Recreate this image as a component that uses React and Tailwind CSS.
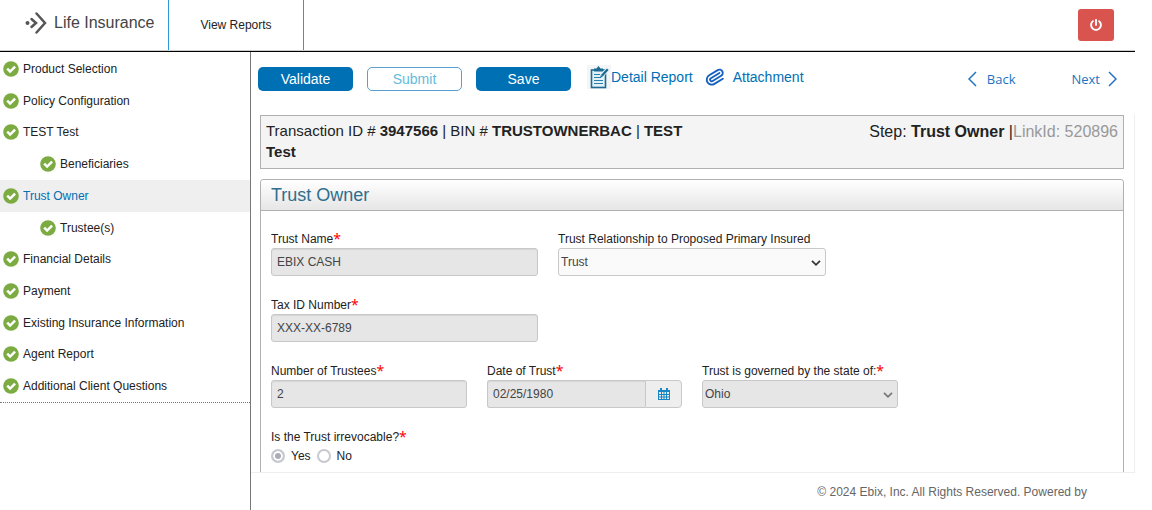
import React from "react";
import { FaPowerOff } from "react-icons/fa";

const steps = [
  { label: "Product Selection" },
  { label: "Policy Configuration" },
  { label: "TEST Test" },
  { label: "Beneficiaries", nested: true },
  { label: "Trust Owner", active: true },
  { label: "Trustee(s)", nested: true },
  { label: "Financial Details" },
  { label: "Payment" },
  { label: "Existing Insurance Information" },
  { label: "Agent Report" },
  { label: "Additional Client Questions" },
];

function Logo() {
  return (
    <svg className="h-6 w-6 shrink-0" viewBox="0 0 24 24" fill="none" stroke="#555" strokeWidth="2.5" strokeLinecap="round" strokeLinejoin="miter" aria-hidden="true">
      <circle cx="3.5" cy="12" r="2" fill="#555" stroke="none" />
      <path d="M7.500 8l4.500 4-4.500 4" />
      <path d="M12.500 2.500l8.500 9.500-8.500 9.500" />
    </svg>
  );
}

function CheckIcon() {
  return (
    <svg className="h-4 w-4 shrink-0" viewBox="0 0 16 16" aria-hidden="true">
      <circle cx="8" cy="8" r="7.800" fill="#7cab42" />
      <path d="M4.200 7.700l2.900 2.900 5-5" fill="none" stroke="#fff" strokeWidth="2.500" />
    </svg>
  );
}

function ReportIcon() {
  return (
    <svg className="h-6 w-6 shrink-0 bg-[#f3f5f6]" viewBox="0 0 24 24" fill="none" aria-hidden="true">
      <rect x="4.500" y="5" width="14" height="17.500" fill="#e3f1f7" stroke="#1d6a93" strokeWidth="1.600" />
      <path d="M7 3.500h2.500l2-2.500 2 2.500H16v3H7z" fill="#1d6a93" />
      <path d="M7 9.500h6M7 12.500h7M7 15.500h9M7 18.500h9" stroke="#2582ad" strokeWidth="1.200" />
      <path d="M20.800 4.200l-6.300 6.800" stroke="#e8f4fa" strokeWidth="4" />
      <path d="M20.800 4.200l-6 6.600" stroke="#1d6a93" strokeWidth="2.300" />
      <path d="M13.200 12.700l.600-2.600 1.900 1.600z" fill="#1d6a93" />
    </svg>
  );
}

function ClipIcon() {
  return (
    <svg className="h-5 w-5 shrink-0" viewBox="0 0 24 24" fill="none" stroke="#1560c0" strokeWidth="2.200" strokeLinecap="round" strokeLinejoin="round" aria-hidden="true">
      <path transform="rotate(14 12 12)" d="m16 6-8.414 8.586a2 2 0 0 0 2.829 2.829l8.414-8.586a4 4 0 1 0-5.657-5.657l-8.379 8.551a6 6 0 1 0 8.485 8.485l8.379-8.551" />
    </svg>
  );
}

function CalendarIcon() {
  return (
    <svg className="h-3 w-3" viewBox="0 0 12 12" aria-hidden="true">
      <path fill="#1687c4" fillRule="evenodd" d="M0 2h2V0h2v2h4V0h2v2h2v10H0zM1 4v2h2V4zm3 0v2h1.500V4zm2.500 0v2H8V4zM9 4v2h2V4zM1 7v1.500h2V7zm3 0v1.500h1.500V7zm2.500 0v1.500H8V7zM9 7v1.500h2V7zM1 9.500V11h2V9.500zm3 0V11h1.500V9.500zm2.500 0V11H8V9.500zM9 9.500V11h2V9.500z" />
    </svg>
  );
}

function Chevron({ className }) {
  return (
    <svg className={className} viewBox="0 0 10 6" fill="none" stroke="currentColor" strokeWidth="1.700" aria-hidden="true">
      <path d="M1 .800l4 4 4-4" />
    </svg>
  );
}

function Star() {
  return <span className="font-['Noto_Sans',sans-serif] text-sm leading-4 text-[#f00]">*</span>;
}

const control = "h-7 w-full min-w-0 rounded-[3px] border border-[#c8c8c8] text-xs text-[#444] opacity-100";

function Field({ id, label, required, className, children }) {
  return (
    <div className={`flex flex-col ${className}`}>
      <label htmlFor={id} className="flex h-[18px] items-center whitespace-nowrap">
        {label}
        {required && <Star />}
      </label>
      {children}
    </div>
  );
}

function TextField({ id, label, value, className }) {
  return (
    <Field id={id} label={label} required className={className}>
      <input id={id} disabled defaultValue={value} className={`${control} bg-[#e6e6e6] px-[5px] shadow-[inset_0_1px_1px_rgba(0,0,0,0.07)]`} />
    </Field>
  );
}

function SelectField({ id, label, value, required, disabled, className }) {
  return (
    <Field id={id} label={label} required={required} className={className}>
      <div className="relative">
        <select id={id} disabled={disabled} defaultValue={value} className={`${control} appearance-none pl-0.5 ${disabled ? "bg-[#e6e6e6]" : "bg-[#fafafa]"}`}>
          <option>{value}</option>
        </select>
        <Chevron className={`pointer-events-none absolute top-3 right-[5px] h-[6px] w-[10px] ${disabled ? "text-[#777]" : "text-[#333]"}`} />
      </div>
    </Field>
  );
}

function Radio({ label, checked }) {
  return (
    <label className="flex items-center gap-1.5">
      <input
        type="radio"
        name="irrevocable"
        disabled
        defaultChecked={checked}
        className="h-3.5 w-3.5 appearance-none rounded-full border-2 border-[#c8c8d0] bg-white checked:bg-[#acacb6] checked:shadow-[inset_0_0_0_2px_#fff]"
      />
      {label}
    </label>
  );
}

export default function App() {
  return (
    <div className="mr-[17px] flex min-h-screen flex-col bg-white font-['Liberation_Sans',Arial,sans-serif] text-xs text-[#222]">
      <header className="flex h-[52px] items-stretch border-b border-black">
        <div className="flex flex-1 items-stretch border-b border-[#ccc]">
          <div className="flex w-[169px] items-center gap-1.5 border-r border-[#2b9ad6] pb-1 pl-6 whitespace-nowrap text-[#444]">
            <Logo />
            <span className="text-base">Life Insurance</span>
          </div>
          <nav className="flex w-[135px] items-center justify-center border-r border-[#2b9ad6]">
            <a href="#reports">View Reports</a>
          </nav>
          <button aria-label="Log out" className="my-[9px] mr-[21px] ml-auto flex w-9 items-center justify-center rounded-[3px] bg-[#d9534f] text-white">
            <FaPowerOff className="h-3 w-3" />
          </button>
        </div>
      </header>

      <div className="flex flex-1">
        <aside className="w-[251px] shrink-0 border-r border-[#777]">
          <ul className="flex h-[351px] flex-col border-b border-dotted border-[#777] pt-px">
            {steps.map((s) => (
              <li key={s.label} className={`flex flex-1 ${s.active ? "bg-[#efefef] text-[#0070b4]" : ""}`}>
                <a href="#step" className={`flex flex-1 items-center gap-1 ${s.nested ? "pl-10" : "pl-[3px]"}`}>
                  <CheckIcon />
                  {s.label}
                </a>
              </li>
            ))}
          </ul>
        </aside>

        <main className="flex min-w-0 flex-1 flex-col">
          <div className="flex h-[62px] items-start pt-[15px] pr-[18px] pl-[7px] text-sm text-[#0070b4]">
            <div className="flex gap-3.5">
              <button className="h-6 w-[95px] rounded-[5px] bg-[#0070b4] text-white">Validate</button>
              <button className="h-6 w-[95px] rounded-[5px] border border-[#5a9fd0] text-[#62bcdc]">Submit</button>
              <button className="h-6 w-[95px] rounded-[5px] bg-[#0070b4] text-white">Save</button>
            </div>
            <a href="#detail" className="ml-4 flex h-5 items-center whitespace-nowrap">
              <ReportIcon />
              Detail Report
            </a>
            <a href="#attachment" className="ml-3 flex h-5 items-center gap-2">
              <ClipIcon />
              Attachment
            </a>
            <div className="ml-auto flex h-6 items-center gap-14 font-['Open_Sans',sans-serif] text-[13px] text-[#2273c0]">
              <a href="#back" className="flex items-center gap-2.5">
                <svg className="h-4 w-[9px]" viewBox="0 0 9 16" fill="none" stroke="currentColor" strokeWidth="1.500" aria-hidden="true"><path d="M8 1L1 8l7 7" /></svg>
                Back
              </a>
              <a href="#next" className="flex items-center gap-2">
                Next
                <svg className="h-4 w-[9px]" viewBox="0 0 9 16" fill="none" stroke="currentColor" strokeWidth="1.500" aria-hidden="true"><path d="M1 1l7 7-7 7" /></svg>
              </a>
            </div>
          </div>

          <div className="border-r border-b border-[#eee] pt-px pr-2.5 pl-[9px]">
            <div className="flex h-[54px] justify-between border border-[#b0b0b0] bg-[#f4f4f4] px-[5px] pt-1 text-[15px] leading-[21px]">
              <p className="w-1/2">
                Transaction ID # <b>3947566</b> | BIN # <b>TRUSTOWNERBAC</b> | <b>TEST Test</b>
              </p>
              <p className="text-base leading-6">
                Step: <b>Trust Owner</b> |<span className="text-[#999]">LinkId: 520896</span>
              </p>
            </div>

            <section className="mt-2.5 rounded-t-[4px] border border-b-0 border-[#b0b0b0]">
              <h2 className="flex h-[31px] items-center rounded-t-[3px] border-b border-[#b0b0b0] bg-linear-to-b from-white to-[#e6e6e6] px-2.5 text-lg text-[#2e6e8e]">
                Trust Owner
              </h2>
              <form className="flex flex-col gap-5 px-2.5 pt-[19px] pb-1.5">
                <div className="flex gap-5">
                  <TextField id="name" label="Trust Name" value="EBIX CASH" className="w-[267px]" />
                  <SelectField id="relation" label="Trust Relationship to Proposed Primary Insured" value="Trust" className="w-[268px]" />
                </div>
                <TextField id="tax" label="Tax ID Number" value="XXX-XX-6789" className="w-[267px]" />
                <div className="flex gap-5">
                  <TextField id="trustees" label="Number of Trustees" value="2" className="w-[196px]" />
                  <Field id="date" label="Date of Trust" required className="w-[195px]">
                    <div className="flex">
                      <input id="date" disabled defaultValue="02/25/1980" className={`${control} rounded-r-none border-r-0 bg-[#e6e6e6] px-[5px] shadow-[inset_0_1px_1px_rgba(0,0,0,0.07)]`} />
                      <button type="button" aria-label="Pick a date" className="flex h-7 w-[37px] shrink-0 items-center justify-center rounded-r-[4px] border border-[#c8c8c8] bg-[#eee]">
                        <CalendarIcon />
                      </button>
                    </div>
                  </Field>
                  <SelectField id="state" label="Trust is governed by the state of:" value="Ohio" required disabled className="w-[196px]" />
                </div>
                <fieldset>
                  <legend className="flex h-[18px] items-center">
                    Is the Trust irrevocable?
                    <Star />
                  </legend>
                  <div className="flex h-5 items-center gap-1.5">
                    <Radio label="Yes" checked />
                    <Radio label="No" />
                  </div>
                </fieldset>
              </form>
            </section>
          </div>

          <footer className="pt-[11px] pr-12 text-right text-[#666]">© 2024 Ebix, Inc. All Rights Reserved. Powered by</footer>
        </main>
      </div>
    </div>
  );
}
